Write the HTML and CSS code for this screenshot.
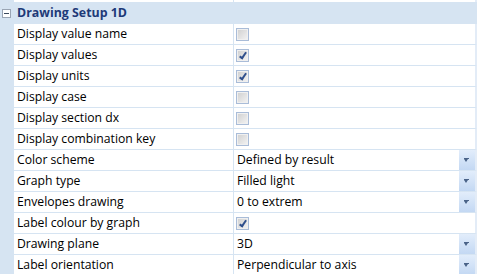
FILE: index.html
```html
<!DOCTYPE html>
<html lang="en">

<head>
    <meta charset="UTF-8">
    <title>Drawing Setup 1D</title>
    <link rel="stylesheet" href="styles.css">
</head>

<body>
    <div class="grid">
        <div class="row stub">
            <div class="gutter"></div>
            <div class="name"></div>
            <div class="value"></div>
        </div>

        <div class="row category">
            <div class="gutter"><span class="toggle"></span></div>
            <div class="cat-title">Drawing Setup 1D</div>
        </div>

        <div class="row">
            <div class="gutter"></div>
            <div class="name">Display value name</div>
            <div class="value"><span class="check"></span></div>
        </div>
        <div class="row">
            <div class="gutter"></div>
            <div class="name">Display values</div>
            <div class="value"><span class="check checked"></span></div>
        </div>
        <div class="row">
            <div class="gutter"></div>
            <div class="name">Display units</div>
            <div class="value"><span class="check checked"></span></div>
        </div>
        <div class="row">
            <div class="gutter"></div>
            <div class="name">Display case</div>
            <div class="value"><span class="check"></span></div>
        </div>
        <div class="row">
            <div class="gutter"></div>
            <div class="name">Display section dx</div>
            <div class="value"><span class="check"></span></div>
        </div>
        <div class="row">
            <div class="gutter"></div>
            <div class="name">Display combination key</div>
            <div class="value"><span class="check"></span></div>
        </div>
        <div class="row">
            <div class="gutter"></div>
            <div class="name">Color scheme</div>
            <div class="value combo"><span class="text">Defined by result</span><span class="drop"></span></div>
        </div>
        <div class="row">
            <div class="gutter"></div>
            <div class="name">Graph type</div>
            <div class="value combo"><span class="text">Filled light</span><span class="drop"></span></div>
        </div>
        <div class="row">
            <div class="gutter"></div>
            <div class="name">Envelopes drawing</div>
            <div class="value combo"><span class="text">0 to extrem</span><span class="drop"></span></div>
        </div>
        <div class="row">
            <div class="gutter"></div>
            <div class="name">Label colour by graph</div>
            <div class="value"><span class="check checked"></span></div>
        </div>
        <div class="row">
            <div class="gutter"></div>
            <div class="name">Drawing plane</div>
            <div class="value combo"><span class="text">3D</span><span class="drop"></span></div>
        </div>
        <div class="row">
            <div class="gutter"></div>
            <div class="name">Label orientation</div>
            <div class="value combo"><span class="text">Perpendicular to axis</span><span class="drop"></span></div>
        </div>
    </div>
</body>

</html>
```

FILE: styles.css
```css
body {
    margin: 0;
    background-color: #ffffff;
    font-family: "Open Sans", "Noto Sans", sans-serif;
    font-size: 12.2px;
    color: #000000;
    overflow: hidden;
}

.grid {
    width: 477px;
}

.row {
    display: flex;
    height: 21px;
}

.gutter {
    width: 14px;
    flex: none;
    background-color: #d6e4f2;
    position: relative;
}

.name {
    width: 216px;
    flex: none;
    padding-left: 3px;
    border-right: 1px solid #d6e4f2;
    border-bottom: 1px solid #d6e4f2;
    line-height: 20px;
    white-space: nowrap;
}

.value {
    flex: 1;
    display: flex;
    align-items: center;
    padding-left: 2px;
    border-bottom: 1px solid #d6e4f2;
    border-right: 2px solid #e3ecf7;
}

.row.stub {
    height: 2px;
}

.row.stub .name,
.row.stub .value {
    border-bottom: none;
    line-height: 2px;
}

.row.category {
    height: 22px;
    background-color: #d6e4f2;
}

.cat-title {
    padding-left: 3px;
    line-height: 21px;
    font-weight: bold;
    font-size: 12.4px;
    color: #1e3a78;
}

.toggle {
    position: absolute;
    left: 2px;
    top: 7px;
    width: 7px;
    height: 7px;
    border: 1px solid #9aa5b4;
    background-color: #ffffff;
}

.toggle::after {
    content: "";
    position: absolute;
    left: 1px;
    top: 3px;
    width: 5px;
    height: 1px;
    background-color: #3c4a5e;
}

.check {
    width: 11px;
    height: 11px;
    border: 1px solid #a9bcd8;
    background: linear-gradient(135deg, #cfcfcf, #f4f4f4);
    box-shadow: inset 0 0 0 1px #f0f0f0;
    position: relative;
}

.check.checked::after {
    content: "";
    position: absolute;
    left: 4px;
    top: 1px;
    width: 2px;
    height: 6px;
    border-right: 2px solid #2f4f8c;
    border-bottom: 2px solid #2f4f8c;
    transform: rotate(35deg);
}

.combo {
    justify-content: space-between;
    align-items: stretch;
    padding-left: 3px;
}

.combo .text {
    line-height: 20px;
}

.drop {
    width: 16px;
    background: linear-gradient(#e2edfb, #c3d8f3);
    position: relative;
}

.drop::before {
    content: "";
    position: absolute;
    left: 5px;
    top: 8px;
    width: 5px;
    height: 1px;
    background-color: #4a6388;
}

.drop::after {
    content: "";
    position: absolute;
    left: 5px;
    top: 9px;
    border-left: 2.5px solid transparent;
    border-right: 2.5px solid transparent;
    border-top: 3px solid #4a6388;
}
```
